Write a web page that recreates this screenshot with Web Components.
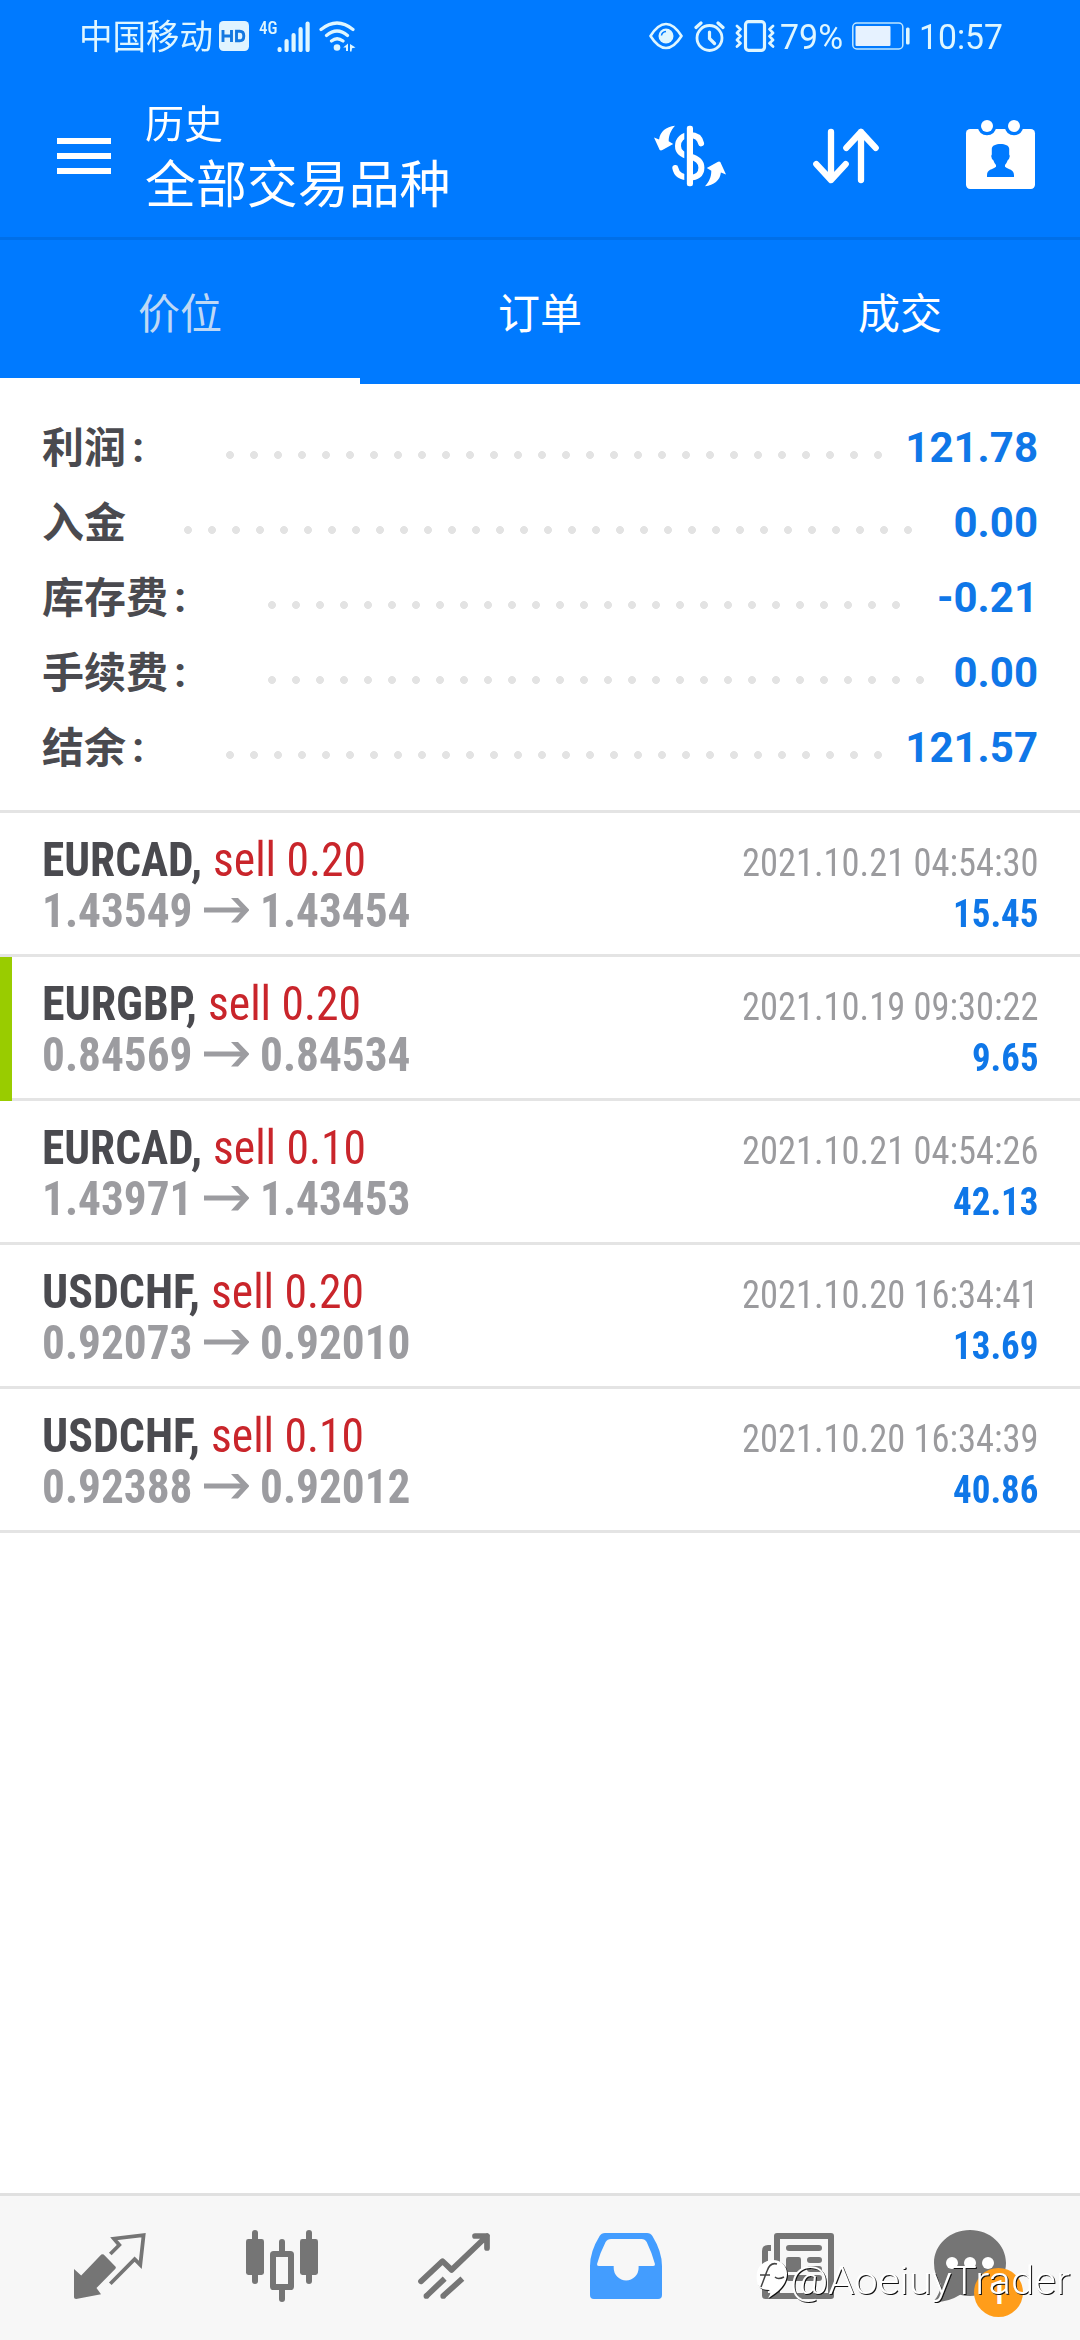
<!DOCTYPE html>
<html lang="zh-CN">
<head>
<meta charset="utf-8">
<title>历史</title>
<style>
html,body{margin:0;padding:0;background:#fff}
body{width:1080px;height:2340px;overflow:hidden;font-family:Roboto,"Noto Sans CJK SC",sans-serif}
</style>
</head>
<body>
<history-app></history-app>
<script>
const define = (name, html, init) => {
  const t = document.createElement('template');
  t.innerHTML = html;
  customElements.define(name, class extends HTMLElement {
    constructor() {
      super();
      this.attachShadow({mode: 'open'}).appendChild(t.content.cloneNode(true));
    }
    connectedCallback() { if (init) init(this, this.shadowRoot); }
  });
};

// Text run squeezed or stretched horizontally to a given advance width.
define('fit-text', `<style>
:host{display:block;white-space:nowrap;flex:none}
span{display:inline-block;transform-origin:0 0}
:host([cond]){font-family:"Roboto Condensed",Roboto,sans-serif;font-stretch:75%}
:host([cjk]){font-family:"Noto Sans CJK SC",sans-serif}
</style><span><slot></slot></span>`, (el, root) => {
  const w = +el.getAttribute('w');
  const s = root.querySelector('span');
  el.style.width = w + 'px';
  const n = s.getBoundingClientRect().width;
  if (n) s.style.transform = 'scaleX(' + (w / n) + ')';
});

const statusIcons = {
  hd: [30,30,`<rect width="30" height="30" rx="4.5" fill="#e0f4ff"/><path d="M4 9v12M12.5 9v12M4 15h8.5M17.5 10.2h3.3q4 0 4 4.8t-4 4.8h-3.3z" fill="none" stroke="#1478e0" stroke-width="2.9"/>`],
  signal: [33,31,`<g stroke="#dff6ff" stroke-width="4.2" stroke-linecap="round"><path d="M2.6 28v1M9.6 20v9M16.6 14v15M23.6 8.200v20.800M30.600 2.500v26.500"/></g>`],
  wifi: [37,31,`<g fill="none" stroke="#dff6ff" stroke-width="3.2" stroke-linecap="round"><path d="M2 8.500Q18 -4.500 34 8.500M7.500 14.500Q18 5.500 28.500 14.500M12.500 20Q18 15.500 24 20"/></g><circle cx="18" cy="26.500" r="3.300" fill="#dff6ff"/><path d="M29 22.500v7.500h-2v-3.500h-2.800zM31 23l5.500 3.500-3.500.8-.5 3.200h-1.500z" fill="#dff6ff"/>`],
  eye: [34,28,`<path d="M1.500 14Q9 2 17 2t15.500 12Q25 26 17 26T1.500 14z" fill="none" stroke="#dff6ff" stroke-width="2.600" stroke-linejoin="round"/><circle cx="17" cy="14" r="7.500" fill="#dff6ff"/><path d="M12.500 13.500q.5-3.500 4.500-4" fill="none" stroke="#007aff" stroke-width="1.500"/>`],
  alarm: [31,31,`<g fill="none" stroke="#dff6ff" stroke-width="2.800" stroke-linecap="round"><circle cx="15.500" cy="17" r="12.500"/><path d="M15.500 11v6.500l5 5M2 6.500l5-4.500M29 6.500l-5-4.500" stroke-width="3.200"/></g>`],
  vibrate: [40,32,`<g fill="none" stroke="#dff6ff" stroke-linejoin="round" stroke-linecap="round"><rect x="10.500" y="1.700" width="19" height="28.600" rx="3" stroke-width="3.200"/><path d="M2 6l3.500 3.200L2 13l3.500 3.200L2 20l3.500 3.200L2 26.500M38 6l-3.500 3.200L38 13l-3.500 3.200L38 20l-3.500 3.200L38 26.500" stroke-width="2.700"/></g>`],
  battery: [58,28,`<rect x=".8" y="1" width="50" height="26" rx="4" fill="none" stroke="#bfe6ff" stroke-width="1.500"/><rect x="3.500" y="4" width="35" height="20" rx="1" fill="#e6f2ff"/><rect x="54" y="5.500" width="3.600" height="17" rx="1.500" fill="#dff6ff"/>`]
};
define('status-icon', `<style>:host,svg{display:block;flex:none}</style><svg></svg>`, (el, root) => {
  const [w, h, body] = statusIcons[el.getAttribute('name')];
  const s = root.querySelector('svg');
  s.setAttribute('width', w); s.setAttribute('height', h); s.innerHTML = body;
});

// Large icons share a 24 unit grid drawn at 72px.
const icons = {
  dollar: `<path d="M15.700 7.800C15.300 5.900 13.900 5 12 5C9.600 5 8 6.500 8 8.700C8 11 9.800 11.800 12 12.200C14.300 12.700 15.800 13.600 15.800 15.900C15.800 18.200 14.200 19.200 12 19.200C9 19.200 7.500 18.200 7.100 16" fill="none" stroke="#fff" stroke-width="2" stroke-linecap="round"/><path d="M10.100 1.900h1v20.200h-1z" fill="#007aff"/><rect x="10.950" y="1.900" width="2.050" height="20.200" rx=".8" fill="#fff"/><g fill="#fff"><path d="M7 1.900C4 2.300 2 3.800 1.700 6.500L0 5.800L1.900 10Q2.300 10.300 2.800 10L6.400 8L4.900 7.100C4.900 5 5.600 3.500 7 1.900z"/><path transform="rotate(180 12 12)" d="M7 1.900C4 2.300 2 3.800 1.700 6.500L0 5.800L1.900 10Q2.300 10.300 2.800 10L6.400 8L4.900 7.100C4.900 5 5.600 3.500 7 1.900z"/></g>`,
  sort: `<path d="M7 4v16M2.100 14.700L7 20l4.900-5.300M17 20V4M12.100 9.300L17 4l4.900 5.300" fill="none" stroke="#fff" stroke-width="2.100" stroke-linecap="round" stroke-linejoin="round"/>`,
  calendar: `<rect y="3" width="23" height="20" rx="1.400" fill="#fff"/><g fill="#007aff"><path d="M4 2.500a3 2.600 0 0 0 6 0zM13 2.500a3 2.600 0 0 0 6 0z"/><path d="M11.500 8C13 8 14.400 8.500 14.400 9.600V11.500L14.600 12Q14.500 13 13.900 13.400Q13.500 14.500 13 15V15.600C14.200 16.600 16 16.400 16 18.400V19H7V18.400C7 16.400 8.800 16.600 10 15.600V15Q9.500 14.500 9.100 13.400Q8.500 13 8.400 12L8.600 11.500V9.600C8.600 8.500 10 8 11.500 8z"/></g><circle cx="7" cy="2" r="2" fill="#fff"/><circle cx="16" cy="2" r="2" fill="#fff"/>`,
  quotes: `<path d="M0 13L2.400 15.200L9.100 8.200Q9.500 7.900 9.900 8.200L13.800 12.200Q14.100 12.500 13.800 12.900L7.500 19.300L9 21.400L.7 23Q0 23 0 22.400z" fill="#757575"/><path d="M12.100 8L15.100 5L13.300 2.900L23.200 1.750L22.100 11.600L20.200 9.700L12.100 17.900" fill="none" stroke="#757575" stroke-width="1.250" stroke-miterlimit="12"/>`,
  candles: `<g fill="#757575"><rect y="3" width="6" height="12" rx=".8"/><rect x="2" width="2" height="18" rx="1"/><rect x="18" y="3" width="6" height="12" rx=".8"/><rect x="20" width="2" height="18" rx="1"/><rect x="11" y="3" width="2" height="6" rx="1"/><rect x="11" y="18" width="2" height="6" rx="1"/></g><rect x="9" y="8" width="6" height="11" rx=".2" fill="#f7f7f7" stroke="#757575" stroke-width="2" stroke-linejoin="round"/>`,
  trade: `<g fill="none" stroke="#757575" stroke-width="1.900" stroke-linejoin="round"><path d="M1 17.100L8.200 10.400L11.200 13.300L23 2M19 2H23V6" stroke-linecap="round"/><path d="M2.900 21.900L8.900 16.200M8.500 21.900L14.800 16.200"/></g><circle cx="2.800" cy="22" r=".95" fill="#757575"/><circle cx="8.400" cy="22" r=".95" fill="#757575"/>`,
  inbox: `<path fill="#439dff" fill-rule="evenodd" d="M5 1H19Q20.200 1 20.800 2Q24 7.200 24 12V21.700Q24 23 22.700 23H1.300Q0 23 0 21.700V12Q0 7.200 3.200 2Q3.800 1 5 1zM7 3Q5.800 3 5.200 4Q3.400 7.500 2.400 11.200Q2.200 12 3 12H7.900V12.700a4.150 4.100 0 0 0 8.300 0V12H21Q21.800 12 21.600 11.200Q20.600 7.500 18.900 4Q18.300 3 17.200 3z"/>`,
  news: `<path d="M1 22V7q0-1 1-1h1" fill="none" stroke="#757575" stroke-width="2"/><path d="M0 21h5v2H1.200Q0 23 0 22z" fill="#757575"/><rect x="5" y="2" width="18" height="20" fill="none" stroke="#757575" stroke-width="2" stroke-linejoin="round"/><path d="M9 6H19M16 10h3M16 13h3M9 16h10" stroke="#757575" stroke-width="2" stroke-linecap="round"/><rect x="8" y="9" width="5" height="5" rx=".8" fill="#757575"/>`,
  chat: `<path d="M12 0C18.700 0 24 4.900 24 11S18.700 22 12 22Q10.200 22 8.700 21.600Q5 24 .5 24Q-.2 24 .2 23.300Q2.200 21 2.200 18Q0 15 0 11C0 4.900 5.300 0 12 0z" fill="#757575"/><g fill="#fff"><circle cx="6" cy="11" r="2"/><circle cx="12" cy="11" r="2"/><circle cx="18" cy="11" r="2"/></g>`
};
define('app-icon', `<style>:host,svg{display:block;flex:none;width:72px;height:72px;overflow:visible}</style><svg viewBox="0 0 24 24"></svg>`,
  (el, root) => { root.querySelector('svg').innerHTML = icons[el.getAttribute('name')]; });

define('status-bar', `<style>
:host{display:flex;align-items:center;justify-content:space-between;height:72px;box-sizing:border-box;padding:0 77.500px 0 79px;color:#dff6ff}
div{display:flex;align-items:center}
.cn{font-size:34px;line-height:72px;margin-top:-3px}
.net{font-size:19px;line-height:20px;font-weight:500;margin:-16px 0 0 10px}
.num{font-size:34.500px;line-height:72px;margin-top:2px}
</style>
<div><fit-text cjk class="cn" w="134">中国移动</fit-text><status-icon name="hd" style="margin-left:6px"></status-icon>
<fit-text cond class="net" w="18.500">4G</fit-text><status-icon name="signal" style="margin-left:-1px"></status-icon><status-icon name="wifi" style="margin-left:9px"></status-icon></div>
<div><status-icon name="eye"></status-icon><status-icon name="alarm" style="margin-left:11px"></status-icon><status-icon name="vibrate" style="margin-left:10px"></status-icon>
<fit-text class="num" w="63" style="margin-left:5px">79%</fit-text><status-icon name="battery" style="margin-left:9px"></status-icon><fit-text class="num" w="84" style="margin-left:9px">10:57</fit-text></div>`);

define('app-bar', `<style>
:host{display:flex;height:168px;box-sizing:border-box;border-bottom:3px solid #006fe8;padding:0 42px 0 57px;color:#fff}
.menu{display:flex;flex-direction:column;gap:9px;width:54px;margin:66px 33.500px 0 0}
.menu i{height:6px;background:#fff}
.t{flex:1;padding-top:24px}
.a{font-size:39px;line-height:50px}
.b{font-size:51px;line-height:60px;margin-top:5px}
.acts{display:flex;gap:84px;padding-top:48px}
</style>
<div class="menu"><i></i><i></i><i></i></div>
<div class="t"><fit-text cjk class="a" w="78">历史</fit-text><fit-text cjk class="b" w="305.500">全部交易品种</fit-text></div>
<div class="acts"><app-icon name="dollar"></app-icon><app-icon name="sort"></app-icon><app-icon name="calendar"></app-icon></div>`);

define('tab-item', `<style>
:host{display:block;flex:1;height:144px;box-sizing:border-box;text-align:center;color:#fff;font:400 42px/142px "Noto Sans CJK SC",sans-serif}
:host([active]){color:#bed8f5;border-bottom:6px solid #fff}
</style><slot></slot>`);

define('summary-row', `<style>
:host{display:flex;height:75px;align-items:flex-start;font-size:42px;font-weight:700}
.l{font-family:"Noto Sans CJK SC",sans-serif;line-height:69px;color:#4a4a4f;white-space:nowrap}
.c{width:35.700px;padding-left:6.300px;line-height:75px;color:#4a4a4f}
.c:empty{display:none}
.d{height:24px;margin:33px 0 0 50.400px;background:radial-gradient(circle at 12px 12px,#e3e3e3 3.600px,transparent 4.300px) 0 0/24px 24px}
.v{margin-left:auto;line-height:75px;color:#0f77e8}
</style><div class="l"><slot></slot></div><div class="c">:</div><div class="d"></div><div class="v"><slot name="value"></slot></div>`,
(el, root) => {
  root.querySelector('.d').style.width = el.getAttribute('dots') * 24 + 'px';
  if (el.hasAttribute('plain')) root.querySelector('.c').textContent = '';
});

define('deal-row', `<style>
:host{display:flex;justify-content:space-between;height:144px;box-sizing:border-box;border-bottom:3px solid #e4e4e4;padding:21px 42px 0}
:host([marked]){border-bottom-color:transparent;
background:linear-gradient(#9c0,#9c0) 0 0/12px 144px no-repeat border-box,linear-gradient(#e4e4e4,#e4e4e4) 0 100%/100% 3px no-repeat border-box}
.line{display:flex;font-size:48px;line-height:51px}
.s{font-weight:700;color:#4a4a4f}
.k{color:#c9252b;margin-left:10.500px}
.p{color:#9c9ca0;font-weight:700}
svg{display:block;margin:12px 10.500px 0 11.500px}
.r{display:flex;flex-direction:column;align-items:flex-end;padding-top:4px;font-size:39px;line-height:51px;color:#9b9b9e}
.g{font-weight:700;color:#0f77e8}
</style>
<div><div class="line"><fit-text cond class="s"></fit-text><fit-text cond class="k" w="153"></fit-text></div>
<div class="line p"><fit-text cond w="150.500" class="f"></fit-text><svg width="45" height="27" viewBox="0 0 45 27"><path d="M0 13H41" stroke="#9c9ca0" stroke-width="5"/><path d="M27 1H34L45.500 13L34 25.500H27L38.500 13z" fill="#9c9ca0"/></svg><fit-text cond w="150.500" class="e"></fit-text></div></div>
<div class="r"><fit-text cond w="296.500" class="d"></fit-text><fit-text cond class="g"></fit-text></div>`);

define('nav-bar', `<style>
:host{display:flex;height:147px;box-sizing:border-box;border-top:3px solid #e0e0e0;background:#f7f7f7;padding:34px 24px 0;position:relative}
.c{flex:1;display:flex;justify-content:center;position:relative}
.badge{position:absolute;left:90px;top:38px;width:49px;height:49px;border-radius:50%;background:#ff9d1a;color:#fff;text-align:center;font:500 34px/48px Roboto,sans-serif}
.mark{position:absolute;left:754px;top:60px;display:flex;color:#fff;filter:drop-shadow(1.200px 1.200px .3px #111)}
.mark fit-text{font-size:38px;line-height:51px;font-weight:300}
</style>
<div class="c"><app-icon name="quotes"></app-icon></div><div class="c"><app-icon name="candles"></app-icon></div><div class="c"><app-icon name="trade"></app-icon></div>
<div class="c"><app-icon name="inbox"></app-icon></div><div class="c"><app-icon name="news"></app-icon></div><div class="c"><app-icon name="chat"></app-icon><div class="badge">1</div></div>
<div class="mark"><svg width="36" height="46" viewBox="0 0 36 46"><path d="M19 4C27 4 33 10 33 17.500C33 28 25 36 14 42Q18 37 15 34Q4 34 3 26Q1 14 8 8Q13 4 19 4z" fill="#fff"/><path d="M23 8Q16 6 13 15L7 31M6 19h10M21 21q3 3 9 0" stroke="#444" stroke-width="1.500" fill="none"/></svg><fit-text w="280">@AoeiuyTrader</fit-text></div>`);

const summary = [['利润','121.78',28],['入金','0.00',31,'plain'],['库存费','-0.21',27],['手续费','0.00',28],['结余','121.57',28]];
const deals = [
  ['EURCAD',160,'sell 0.20','1.43549','1.43454','2021.10.21 04:54:30','15.45'],
  ['EURGBP',155,'sell 0.20','0.84569','0.84534','2021.10.19 09:30:22','9.65',1],
  ['EURCAD',160,'sell 0.10','1.43971','1.43453','2021.10.21 04:54:26','42.13'],
  ['USDCHF',158,'sell 0.20','0.92073','0.92010','2021.10.20 16:34:41','13.69'],
  ['USDCHF',158,'sell 0.10','0.92388','0.92012','2021.10.20 16:34:39','40.86']
];
define('history-app', `<style>
:host{display:flex;flex-direction:column;height:2340px;background:#fff}
header{background:#007aff}
.tabs{display:flex}
.sum{padding:26px 42px 25px;border-bottom:3px solid #e4e4e4}
.list{flex:1}
</style>
<header><status-bar></status-bar><app-bar></app-bar>
<div class="tabs"><tab-item active>价位</tab-item><tab-item>订单</tab-item><tab-item>成交</tab-item></div></header>
<div class="sum"></div><div class="list"></div><nav-bar></nav-bar>`, (el, root) => {
  root.querySelector('.sum').innerHTML = summary.map(([l, v, d, p]) => `<summary-row dots="${d}" ${p || ''}>${l}<span slot="value">${v}</span></summary-row>`).join('');
  const list = root.querySelector('.list');
  for (const [sym, w, kind, from, to, date, gain, marked] of deals) {
    const row = document.createElement('deal-row');
    if (marked) row.setAttribute('marked', '');
    const put = (c, text, width) => {
      const n = row.shadowRoot.querySelector(c);
      if (width) n.setAttribute('w', width);
      n.textContent = text;
    };
    put('.s', sym + ',', w); put('.k', kind); put('.f', from); put('.e', to); put('.d', date);
    put('.g', gain, gain.length > 4 ? 85.5 : 66.5);
    list.appendChild(row);
  }
});
</script>
</body>
</html>
